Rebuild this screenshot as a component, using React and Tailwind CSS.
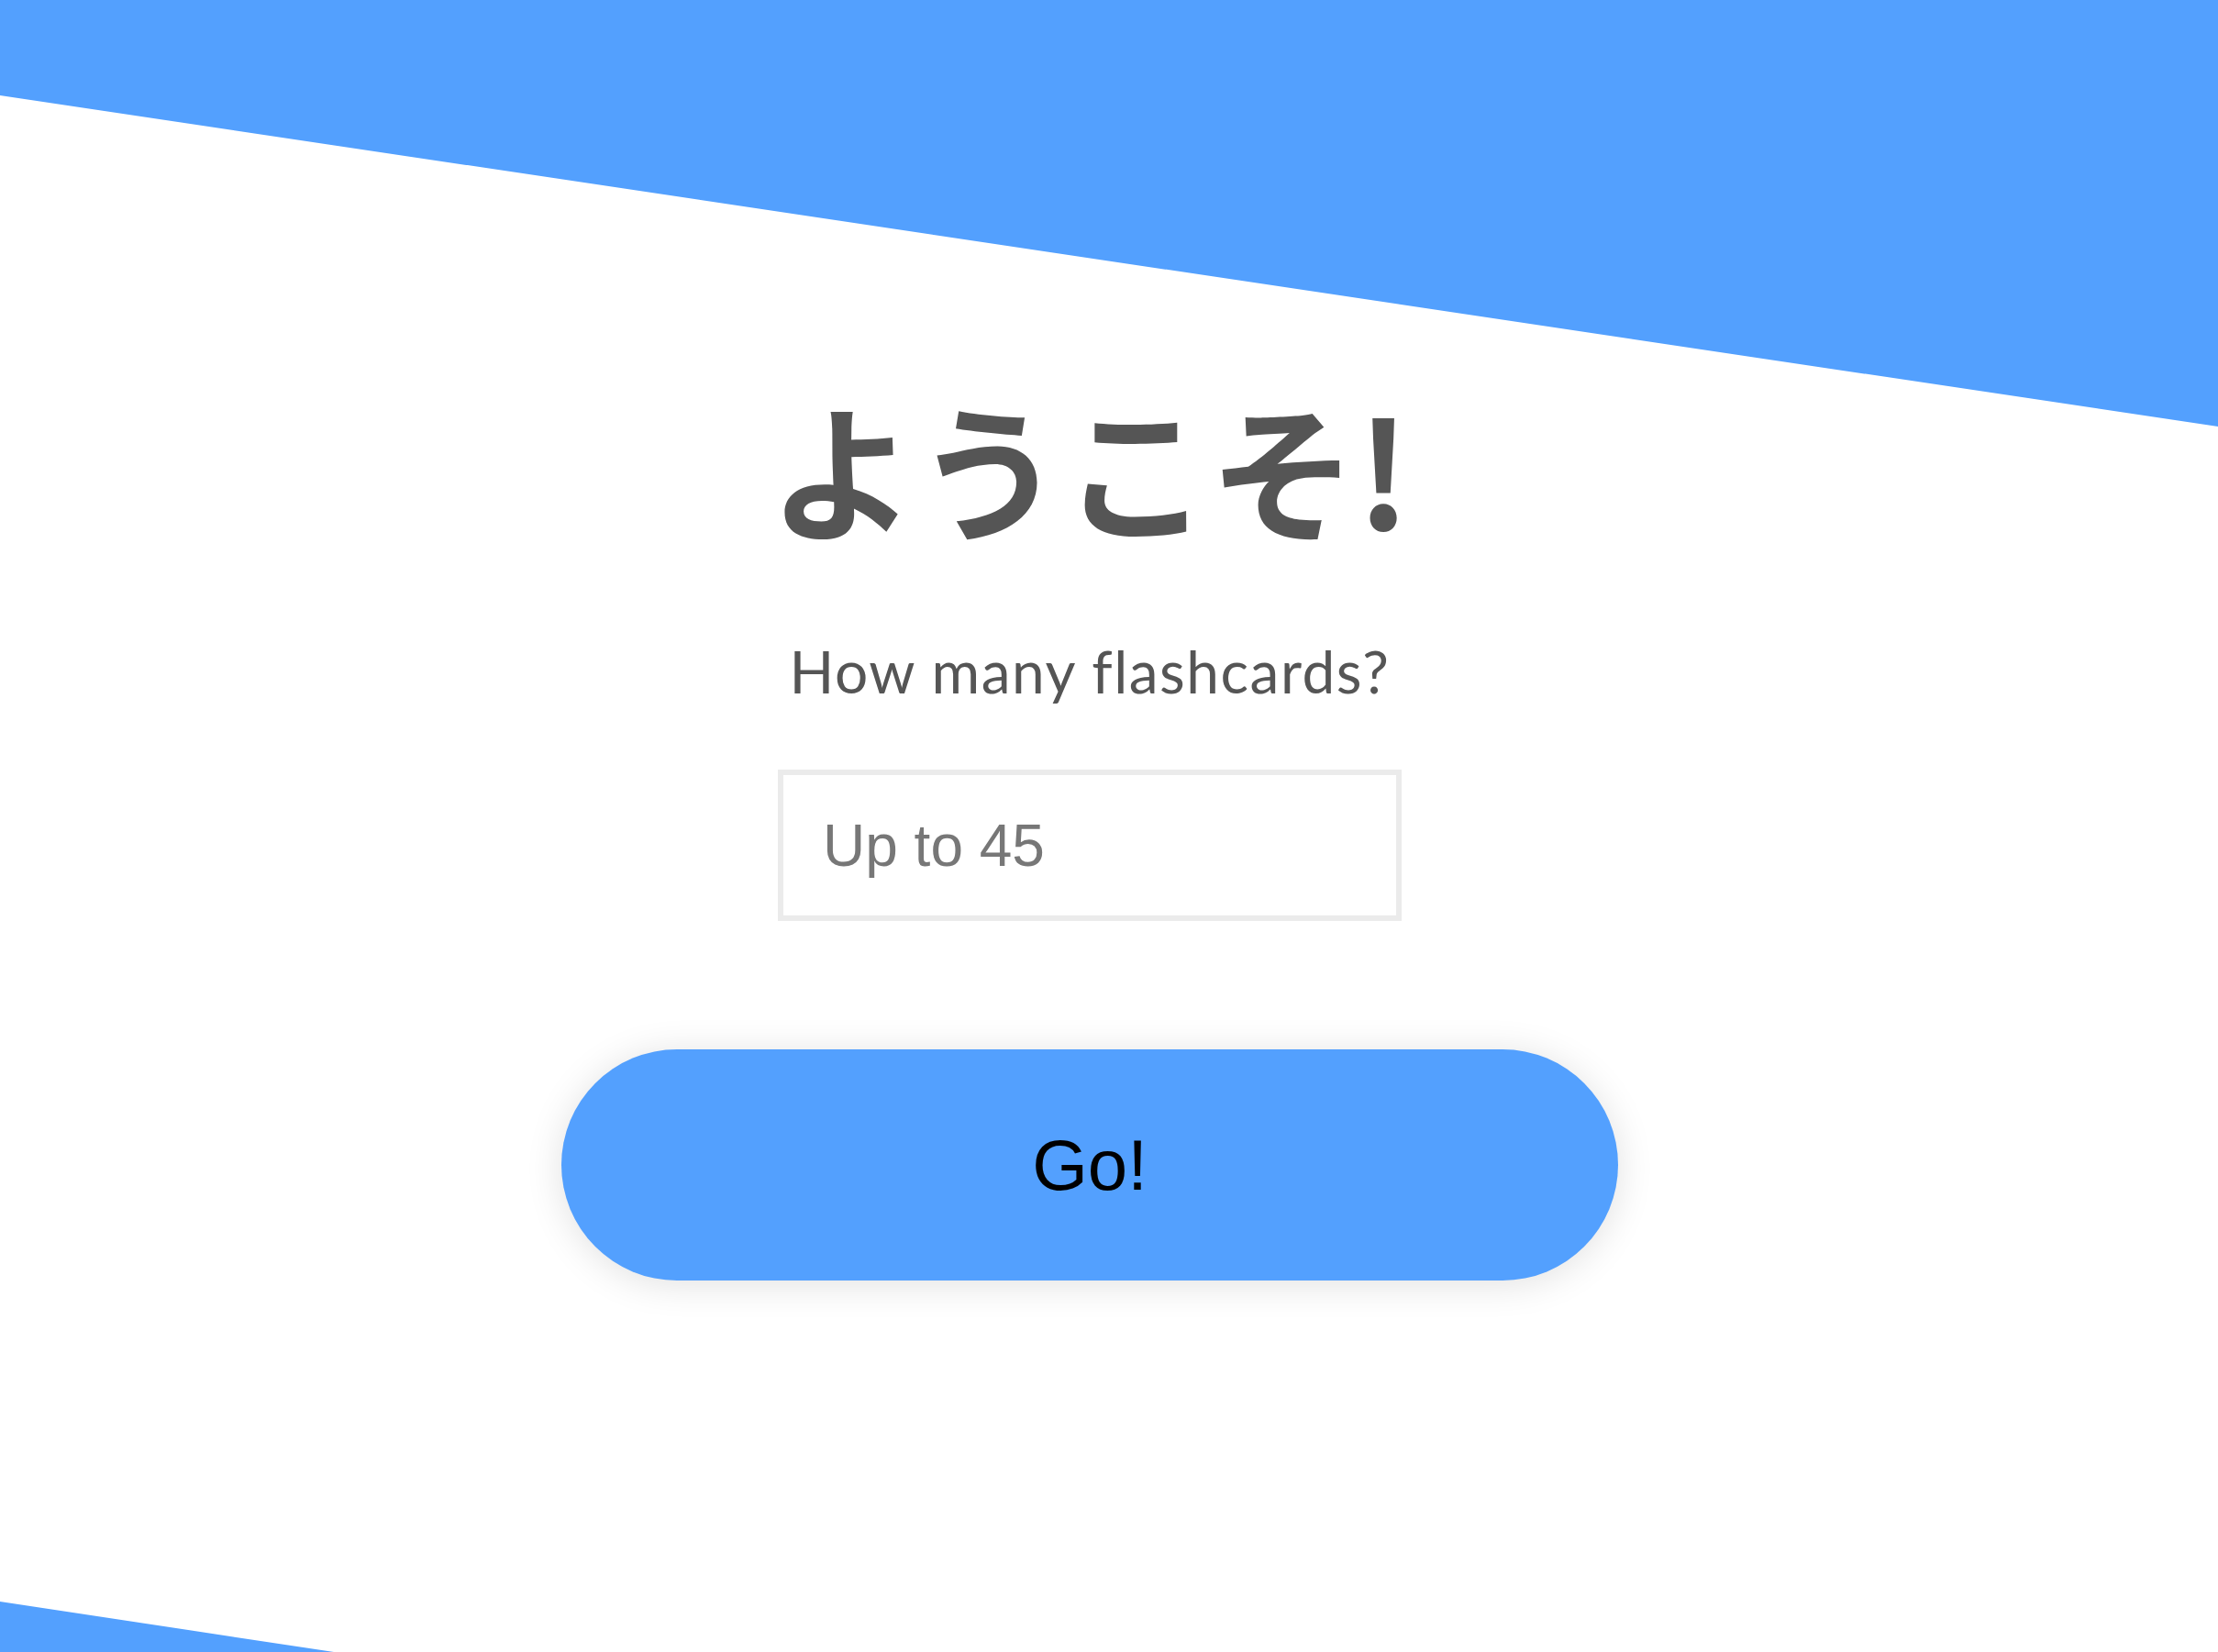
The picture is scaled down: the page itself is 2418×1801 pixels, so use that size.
// Welcome screen — choose how many flashcards to study.

import { useState } from 'react'

export default function App() {
  const [count, setCount] = useState('')

  return (
    <div className="relative h-[1801px] w-full overflow-hidden bg-white">
      {/* background bands */}
      <div className="absolute left-0 top-0 h-[465px] w-full bg-[#53a0fe] [clip-path:polygon(0_0,100%_0,100%_100%,0_104px)]" />
      <div className="absolute bottom-0 left-0 h-[55px] w-[364px] bg-[#53a0fe] [clip-path:polygon(0_0,100%_100%,0_100%)]" />

      <main className="relative flex flex-col items-center pr-[42px] pt-[428px]">
        <h1 className="text-[160px] font-bold leading-none text-[#555555] [font-family:'Noto_Sans_CJK_JP','Noto_Sans',sans-serif]">
          ようこそ!
        </h1>

        <p className="mt-[112px] text-[64px] leading-none tracking-[1.5px] text-[#555555] [font-family:Lato,'Noto_Sans',sans-serif]">
          How many flashcards?
        </p>

        <input
          type="number"
          value={count}
          onChange={(e) => setCount(e.target.value)}
          placeholder="Up to 45"
          className="mt-[75px] h-[165px] w-[680px] border-[6px] border-[#ebebeb] bg-white px-[43px] text-[64px] text-[#555] placeholder:text-[#777777] focus:outline-none [font-family:'Liberation_Sans',Arial,sans-serif]"
        />

        <button
          type="button"
          className="mt-[140px] h-[252px] w-[1152px] rounded-full bg-[#53a0fe] text-[78px] text-black shadow-[0_4px_40px_rgba(0,0,0,0.12)] [font-family:'Liberation_Sans',Arial,sans-serif]"
        >
          Go!
        </button>
      </main>
    </div>
  )
}
